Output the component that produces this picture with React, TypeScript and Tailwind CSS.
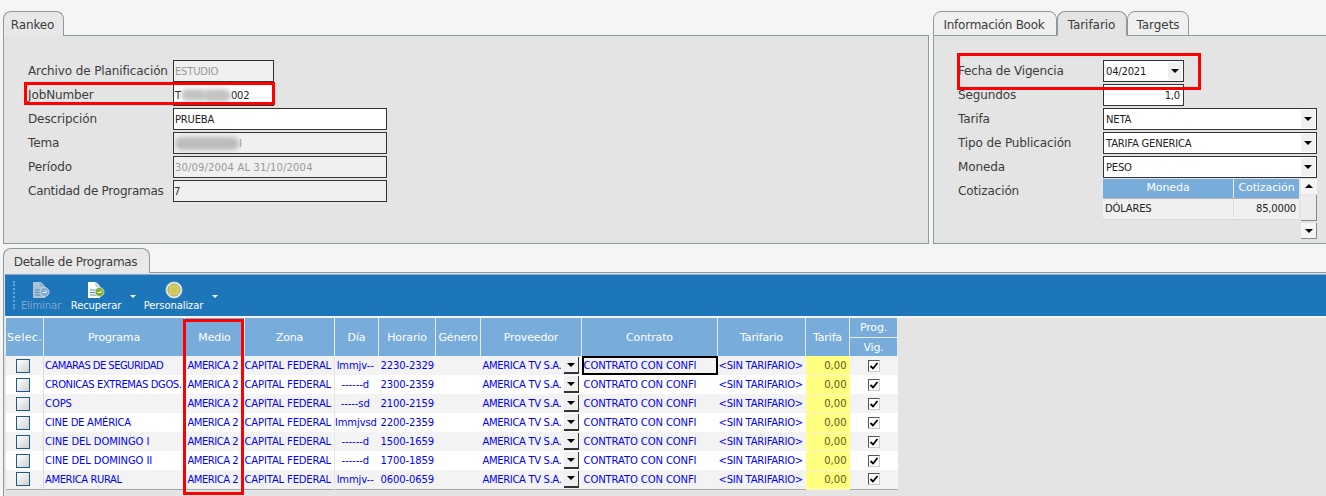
import type { ReactNode } from "react";

const rows = [
  { programa: "CAMARAS DE SEGURIDAD", fit: "tracking-[-0.55px]", dia: "lmmjv--", horario: "2230-2329" },
  { programa: "CRONICAS EXTREMAS DGOS.", fit: "tracking-[-0.4px]", dia: "------d", horario: "2300-2359" },
  { programa: "COPS", fit: "tracking-[-0.1px]", dia: "-----sd", horario: "2100-2159" },
  { programa: "CINE DE AMÉRICA", fit: "tracking-[-0.25px]", dia: "lmmjvsd", horario: "2200-2359" },
  { programa: "CINE DEL DOMINGO I", fit: "tracking-[-0.1px]", dia: "------d", horario: "1500-1659" },
  { programa: "CINE DEL DOMINGO II", fit: "tracking-[-0.1px]", dia: "------d", horario: "1700-1859" },
  { programa: "AMERICA RURAL", fit: "tracking-[-0.4px]", dia: "lmmjv--", horario: "0600-0659" },
];

function Arrow() {
  return <span className="h-0 w-0 border-x-[4px] border-t-[4px] border-x-transparent border-t-black" />;
}

function Tab({ label, className = "" }: { label: string; className?: string }) {
  return (
    <div
      className={`flex h-[25px] items-center justify-center rounded-t-lg border border-[#8b9a9c] text-[12px] text-[#3c3c3c] ${className}`}
    >
      {label}
    </div>
  );
}

function Field({ label, width, children }: { label: string; width: string; children: ReactNode }) {
  return (
    <div className="flex h-[24px] items-center">
      <span className={`shrink-0 text-[12px] tracking-[-0.12px] text-[#3c3c3c] ${width}`}>{label}</span>
      {children}
    </div>
  );
}

function Input({ children, disabled, className = "" }: { children: ReactNode; disabled?: boolean; className?: string }) {
  return (
    <div
      className={`relative flex h-[22px] items-center overflow-hidden border border-[#333] px-[1px] text-[10px] tracking-[-0.2px] ${
        disabled ? "bg-[#f0f0f0] text-[#999]" : "bg-white text-[#222]"
      } ${className}`}
    >
      {children}
    </div>
  );
}

function Select({ text, width }: { text: string; width: string }) {
  return (
    <div className={`flex h-[22px] items-center justify-between border border-[#333] bg-white pl-[2px] pr-[1px] text-[10px] tracking-[-0.2px] text-[#222] ${width}`}>
      {text}
      <span className="flex h-[18px] w-[14px] items-center justify-center bg-[#f0f0f0]">
        <Arrow />
      </span>
    </div>
  );
}

function ToolButton({ label, icon, muted, caret, className = "" }: { label: string; icon: ReactNode; muted?: boolean; caret?: boolean; className?: string }) {
  return (
    <div className={`relative flex flex-col items-center ${className}`}>
      {icon}
      <span className={`text-[10px] leading-[14px] tracking-[-0.1px] ${muted ? "text-[#7fa6c9]" : "text-white"}`}>{label}</span>
      {caret && <span className="absolute right-[-14px] top-[14px] h-0 w-0 border-x-[3px] border-t-[3px] border-x-transparent border-t-white" />}
    </div>
  );
}

function DocIcon({ page, badge }: { page: string; badge: string }) {
  return (
    <svg width="18" height="18" viewBox="0 0 18 18">
      <path d="M1 1h8l4 4v12H1z" fill={page} />
      <path d="M9 1v4h4" fill="none" stroke="#7fa6c9" strokeWidth="0.8" />
      <path d="M3 9h6M3 11.5h5M3 14h6" stroke="#5b86ad" strokeWidth="1" />
      <circle cx="12.5" cy="11" r="4.5" fill={badge} stroke="#dfe9f1" strokeWidth="0.8" />
      <path d="M10.5 11.5h3.5v-2" stroke="#fff" strokeWidth="1" fill="none" />
    </svg>
  );
}

function GlobeIcon() {
  return (
    <svg width="18" height="18" viewBox="0 0 18 18">
      <circle cx="9" cy="9" r="8" fill="#e8eef2" stroke="#c9d6de" />
      <circle cx="9" cy="9" r="6" fill="#e0d565" stroke="#7d7d3a" strokeWidth="0.6" />
      <path d="M3 7h12M3 9h12M3 11h12M7 3v12M9 3v12M11 3v12" stroke="#bdb24a" strokeWidth="0.5" />
    </svg>
  );
}

function Th({ children, rowSpan, className = "" }: { children: ReactNode; rowSpan?: number; className?: string }) {
  return (
    <th rowSpan={rowSpan} className={`border-x border-[#e6ecf1] bg-[#78acdb] p-0 pt-[2px] text-center text-[11px] font-normal tracking-[-0.15px] text-white ${className}`}>
      {children}
    </th>
  );
}

const cell = "h-[19px] overflow-hidden whitespace-nowrap border-0 p-0 text-[10px] text-[#0000ff]";

export default function App() {
  return (
    <div className="relative h-[496px] w-[1326px] overflow-hidden bg-[#f5f5f5] font-['DejaVu_Sans',sans-serif]">
      {/* Top panels */}
      <div className="flex gap-[4px] pl-[3px] pt-[11px]">
        <div className="w-[926px]">
          <Tab label="Rankeo" className="relative z-10 -mb-px w-[61px] border-b-0 bg-[#e8e8e8] pr-[2px] pt-[1px] tracking-[-0.1px]" />
          <div className="h-[209px] border border-[#8b9a9c] bg-[#e4e4e4] pl-[24px] pt-[23px]">
            <Field label="Archivo de Planificación" width="w-[145px]">
              <Input disabled className="w-[101px]">ESTUDIO</Input>
            </Field>
            <Field label="JobNumber" width="w-[145px]">
              <Input className="w-[101px]">
                <span>T</span>
                <span className="h-[12px] w-[26px] rounded-full bg-[#c4c4c4] blur-[2px]" />
                <span className="-ml-[4px] h-[13px] w-[28px] rounded-full bg-[#c4c4c4] blur-[2px]" />
                <span>002</span>
              </Input>
            </Field>
            <Field label="Descripción" width="w-[145px]">
              <Input className="w-[214px]">PRUEBA</Input>
            </Field>
            <Field label="Tema" width="w-[145px]">
              <Input disabled className="w-[214px]">
                <span className="h-[13px] w-[64px] rounded-full bg-[#bcbcbc] blur-[2px]" />
                <span>I</span>
              </Input>
            </Field>
            <Field label="Período" width="w-[145px]">
              <Input disabled className="w-[214px] !tracking-[0.15px]">30/09/2004 AL 31/10/2004</Input>
            </Field>
            <Field label="Cantidad de Programas" width="w-[145px] !tracking-[-0.25px]">
              <Input disabled className="w-[214px] !px-0 !text-[#333]">7</Input>
            </Field>
          </div>
        </div>

        <div className="flex-1">
          <div className="relative z-10 -mb-px flex">
            <Tab label="Información Book" className="w-[124px] bg-[#f0f0f0] pr-[2px] pt-[2px] tracking-[-0.25px]" />
            <Tab label="Tarifario" className="w-[70px] border-b-[#e4e4e4] bg-[#e4e4e4] pr-[1px] pt-[2px] tracking-[-0.05px]" />
            <Tab label="Targets" className="w-[62px] bg-[#f0f0f0] pt-[2px] tracking-[-0.05px]" />
          </div>
          <div className="h-[209px] border-y border-l border-[#8b9a9c] bg-[#e4e4e4] pl-[24px] pt-[23px]">
            <Field label="Fecha de Vigencia" width="w-[145px] !tracking-[-0.2px]">
              <Select text="04/2021" width="w-[81px]" />
            </Field>
            <Field label="Segundos" width="w-[145px]">
              <Input className="w-[81px] justify-end !pr-[3px]">1,0</Input>
            </Field>
            <Field label="Tarifa" width="w-[145px]">
              <Select text="NETA" width="w-[214px]" />
            </Field>
            <Field label="Tipo de Publicación" width="w-[145px]">
              <Select text="TARIFA GENERICA" width="w-[214px]" />
            </Field>
            <Field label="Moneda" width="w-[145px]">
              <Select text="PESO" width="w-[214px]" />
            </Field>
            <div className="flex h-[60px] items-start">
              <span className="mt-[3px] w-[145px] text-[12px] tracking-[-0.12px] text-[#3c3c3c]">Cotización</span>
              <div className="w-[196px]">
                <div className="flex h-[19px] text-[11px] tracking-[-0.1px] text-white">
                  <div className="flex w-[130px] items-center justify-center bg-[#78acdb]">Moneda</div>
                  <div className="flex w-[66px] items-center justify-center border-l border-[#e6ecf1] bg-[#78acdb]">Cotización</div>
                </div>
                <div className="flex h-[22px] border-y border-t-[#b5b5b5] border-b-[#d8d8d8] bg-[#f0f0f0] pb-[2px] text-[10px] tracking-[-0.2px] text-[#222]">
                  <div className="flex w-[130px] items-center pl-[2px]">DÓLARES</div>
                  <div className="flex w-[66px] items-center justify-end border-l border-[#dcdcdc] pr-[3px]">85,0000</div>
                </div>
              </div>
              <div className="ml-[2px] flex h-[60px] w-[16px] flex-col items-center">
                <div className="flex h-[15px] w-[16px] items-center justify-center bg-[#f5f5f5]">
                  <span className="h-0 w-0 border-x-[4px] border-b-[4px] border-x-transparent border-b-black" />
                </div>
                <div className="mt-[1px] h-[27px] w-[16px] border-b border-r border-[#888] bg-[#ececec]" />
                <div className="mt-[2px] flex h-[16px] w-[16px] items-center justify-center border-b border-r border-[#888] bg-[#f5f5f5]">
                  <Arrow />
                </div>
              </div>
            </div>
          </div>
        </div>
      </div>

      {/* Detalle de Programas */}
      <div className="ml-[3px] mt-[4px]">
        <Tab label="Detalle de Programas" className="relative z-10 -mb-px w-[147px] border-b-0 bg-[#e8e8e8] pr-[2px] pt-[1px] tracking-[-0.3px]" />
        <div className="h-[224px] border-l border-t border-[#8b9a9c] bg-[#e4e4e4] pl-[1px] pt-px">
          <div className="flex h-[42px] items-start border-t border-[#8aa9c4] bg-[#1d75ba] pl-[8px] pt-[6px]">
            <div className="mr-[5px] h-[28px] border-l-2 border-dotted border-[#6ea3cf]" />
            <ToolButton label="Eliminar" muted icon={<DocIcon page="#a9c3d8" badge="#7fa9c9" />} className="w-[42px]" />
            <ToolButton label="Recuperar" caret icon={<DocIcon page="#ffffff" badge="#7fb02c" />} className="ml-[8px] w-[52px]" />
            <ToolButton label="Personalizar" caret icon={<GlobeIcon />} className="ml-[21px] w-[61px]" />
          </div>
          <div className="h-[2px] bg-[#f4f4f4]" />
          <table className="w-[893px] table-fixed border-collapse">
            <colgroup>
              <col className="w-[38px]" />
              <col className="w-[141px]" />
              <col className="w-[60px]" />
              <col className="w-[90px]" />
              <col className="w-[44px]" />
              <col className="w-[57px]" />
              <col className="w-[45px]" />
              <col className="w-[101px]" />
              <col className="w-[136px]" />
              <col className="w-[88px]" />
              <col className="w-[44px]" />
              <col className="w-[48px]" />
            </colgroup>
            <thead>
              <tr className="h-[19px]">
                <Th rowSpan={2} className="!tracking-[0.3px]">Selec.</Th>
                <Th rowSpan={2}>Programa</Th>
                <Th rowSpan={2}>Medio</Th>
                <Th rowSpan={2}>Zona</Th>
                <Th rowSpan={2}>Día</Th>
                <Th rowSpan={2}>Horario</Th>
                <Th rowSpan={2}>Género</Th>
                <Th rowSpan={2}>Proveedor</Th>
                <Th rowSpan={2}>Contrato</Th>
                <Th rowSpan={2}>Tarifario</Th>
                <Th rowSpan={2}>Tarifa</Th>
                <Th className="border-b">Prog.</Th>
              </tr>
              <tr className="h-[19px]">
                <Th>Vig.</Th>
              </tr>
            </thead>
            <tbody className="border-b border-[#a8a8a8]">
              {rows.map((row, i) => (
                <tr key={row.programa} className={i % 2 === 0 ? "bg-[#f3f3f3]" : "bg-white"}>
                  <td className={`${cell} border-r border-[#dcdcdc]`}>
                    <div className="flex justify-center pr-[3px]">
                      <span className="h-[14px] w-[14px] border border-[#1d5a8c] bg-gradient-to-br from-white to-[#d0d0d0]" />
                    </div>
                  </td>
                  <td className={`${cell} pl-[1px] ${row.fit}`}>{row.programa}</td>
                  <td className={`${cell} pl-[3px] tracking-[-0.5px]`}>AMERICA 2</td>
                  <td className={`${cell} border-r border-[#e4e4e4] tracking-[-0.15px]`}>CAPITAL FEDERAL</td>
                  <td className={`${cell} pr-[3px] text-center tracking-[-0.1px]`}>{row.dia}</td>
                  <td className={`${cell} pl-[2px] tracking-[-0.1px]`}>{row.horario}</td>
                  <td className={cell} />
                  <td className={`${cell} pl-[2px]`}>
                    <div className="flex items-center justify-between pr-[3px]">
                      <span className="tracking-[-0.35px]">AMERICA TV S.A.</span>
                      <span className="flex h-[17px] w-[15px] shrink-0 items-center justify-center border-b-2 border-r border-[#333] bg-[#f0f0f0]">
                        <Arrow />
                      </span>
                    </div>
                  </td>
                  <td className={`${cell} pl-[2px] tracking-[-0.1px] ${i === 0 ? "outline-2 -outline-offset-2 outline-black" : ""}`}>CONTRATO CON CONFI</td>
                  <td className={`${cell} pl-[1px] tracking-[-0.25px]`}>{"<SIN TARIFARIO>"}</td>
                  <td className={`${cell} border-b border-[#f5f5d0] bg-[#ffff80] pr-[3px] text-right !text-[#5c5c1c]`}>0,00</td>
                  <td className={cell}>
                    <div className="flex justify-center">
                      <span className="flex h-[12px] w-[12px] items-center justify-center border border-b-[#ccc] border-l-[#555] border-r-[#ccc] border-t-[#555] bg-white">
                        <svg width="10" height="10" viewBox="0 0 10 10">
                          <path d="M1.5 5l2.5 2.5L8.5 2" stroke="#000" strokeWidth="1.8" fill="none" />
                        </svg>
                      </span>
                    </div>
                  </td>
                </tr>
              ))}
            </tbody>
          </table>
        </div>
      </div>

      {/* Red annotation boxes over the screenshot */}
      <div className="absolute left-[24px] top-[82px] h-[23px] w-[251px] border-[3px] border-[#ff0000]" />
      <div className="absolute left-[957px] top-[53px] h-[37px] w-[244px] border-[3px] border-[#ff0000]" />
      <div className="absolute left-[183px] top-[319px] h-[176px] w-[61px] border-[3px] border-[#ff0000]" />
    </div>
  );
}
